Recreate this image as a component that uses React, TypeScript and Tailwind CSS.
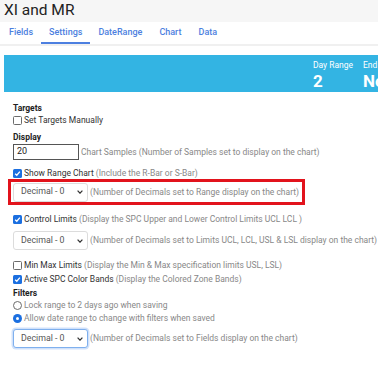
import React from "react";

const font = { fontFamily: "Roboto, 'Liberation Sans', sans-serif" };

function Check({ checked }: { checked?: boolean }) {
  return checked ? (
    <span className="inline-flex h-[9px] w-[9px] shrink-0 items-center justify-center rounded-[1.5px] bg-[#1b6fe0]">
      <svg width="7" height="7" viewBox="0 0 8 8">
        <path d="M1.3 4.2 L3.2 6 L6.7 1.8" stroke="#fff" strokeWidth="1.5" fill="none" />
      </svg>
    </span>
  ) : (
    <span className="inline-block h-[9px] w-[9px] shrink-0 rounded-[1.5px] border border-[#6b6b6b] bg-white" />
  );
}

function Radio({ checked }: { checked?: boolean }) {
  return checked ? (
    <span className="inline-flex h-[9px] w-[9px] shrink-0 items-center justify-center rounded-full bg-[#1b6fe0]">
      <span className="h-[3px] w-[3px] rounded-full bg-white" />
    </span>
  ) : (
    <span className="inline-block h-[9px] w-[9px] shrink-0 rounded-full border border-[#6b6b6b] bg-white" />
  );
}

function Select({ focus }: { focus?: boolean }) {
  return (
    <div
      className={
        "flex h-[19px] w-[75px] shrink-0 items-center justify-between rounded-[3px] bg-white pl-[7px] pr-[4px] text-[8.8px] text-[#555] " +
        (focus ? "border border-[#7fb0ee] shadow-[0_0_0_1.5px_rgba(120,170,240,0.35)]" : "border border-[#dcdcdc]")
      }
    >
      <span>Decimal - 0</span>
      <svg width="6" height="4" viewBox="0 0 6 4">
        <path d="M0.6 0.6 L3 3.2 L5.4 0.6" stroke="#333" strokeWidth="1.2" fill="none" />
      </svg>
    </div>
  );
}

function CheckRow({ checked, label, note }: { checked?: boolean; label: string; note: string }) {
  return (
    <div className="flex h-[13px] items-center gap-[2px] whitespace-nowrap text-[8.5px]">
      <Check checked={checked} />
      <span className="text-[#333]">{label}</span>
      <span className="text-[#888]">{note}</span>
    </div>
  );
}

export default function App() {
  return (
    <div className="h-[369px] w-[378px] overflow-hidden bg-white" style={font}>
      <div className="flex h-[22px] items-center bg-[#f6f6f6] pl-[4px] text-[15.5px] text-[#222]">XI and MR</div>
      <div className="flex h-[24px] items-end border-b-2 border-[#f0f0f0] pl-[9px] text-[9px] font-medium text-[#4d7fe0]">
        <span className="mb-[5px]">Fields</span>
        <span className="ml-[8px] border-b-2 border-[#4d7fe0] px-[8px] pb-[3px]">Settings</span>
        <span className="mb-[5px] ml-[8px]">DateRange</span>
        <span className="mb-[5px] ml-[17px]">Chart</span>
        <span className="mb-[5px] ml-[17px]">Data</span>
      </div>
      <div className="ml-[4px] mt-[9px] flex h-[37px] justify-end gap-[10px] bg-[#33b4e3] pt-[4px] text-white">
        <div className="flex flex-col">
          <span className="text-[8.5px] leading-[12px]">Day Range</span>
          <span className="text-[17px] font-bold leading-[20px]">2</span>
        </div>
        <div className="flex w-[15px] flex-col overflow-hidden">
          <span className="whitespace-nowrap text-[8.5px] leading-[12px]">End</span>
          <span className="whitespace-nowrap text-[17px] font-bold leading-[20px]">No</span>
        </div>
      </div>

      <div className="pl-[13px] pt-[10px]">
        <div className="h-[12px] text-[8.5px] font-bold leading-[12px] text-[#222]">Targets</div>
        <div className="flex h-[13px] items-center gap-[2px] text-[8.5px] text-[#333]">
          <Check />
          <span>Set Targets Manually</span>
        </div>
        <div className="mt-[4px] h-[13px] text-[8.5px] font-bold leading-[13px] text-[#222]">Display</div>
        <div className="flex items-center gap-[2px] whitespace-nowrap">
          <div className="flex h-[16px] w-[66px] items-center border border-[#555] pl-[3px] text-[9px] text-[#222]">20</div>
          <span className="text-[8.5px] text-[#888]">Chart Samples (Number of Samples set to display on the chart)</span>
        </div>
        <div className="mt-[7px]">
          <CheckRow checked label="Show Range Chart" note="(Include the R-Bar or S-Bar)" />
        </div>
      </div>

      <div className="-mt-[1px] ml-[8px] flex h-[26px] w-[297px] items-center gap-[2px] whitespace-nowrap border-[3px] border-[#e2131c] pl-[2px]">
        <Select />
        <span className="text-[8.5px] text-[#888]">(Number of Decimals set to Range display on the chart)</span>
      </div>

      <div className="pl-[13px] pt-[8px]">
        <CheckRow checked label="Control Limits" note="(Display the SPC Upper and Lower Control Limits UCL LCL )" />
        <div className="mt-[5px] flex items-center gap-[2px] whitespace-nowrap">
          <Select />
          <span className="text-[8.5px] text-[#888]">(Number of Decimals set to Limits UCL, LCL, USL &amp; LSL display on the chart)</span>
        </div>
        <div className="mt-[9px]">
          <CheckRow label="Min Max Limits" note="(Display the Min & Max specification limits USL, LSL)" />
        </div>
        <div className="mt-[1px]">
          <CheckRow checked label="Active SPC Color Bands" note="(Display the Colored Zone Bands)" />
        </div>
        <div className="mt-[1px] h-[12px] text-[8.5px] font-bold leading-[12px] text-[#222]">Filters</div>
        <div className="flex h-[13px] items-center gap-[2px] text-[8.5px] text-[#888]">
          <Radio />
          <span>Lock range to 2 days ago when saving</span>
        </div>
        <div className="flex h-[13px] items-center gap-[2px] text-[8.5px] text-[#888]">
          <Radio checked />
          <span>Allow date range to change with filters when saved</span>
        </div>
        <div className="mt-[4px] flex items-center gap-[2px] whitespace-nowrap">
          <Select focus />
          <span className="text-[8.5px] text-[#888]">(Number of Decimals set to Fields display on the chart)</span>
        </div>
      </div>
    </div>
  );
}
